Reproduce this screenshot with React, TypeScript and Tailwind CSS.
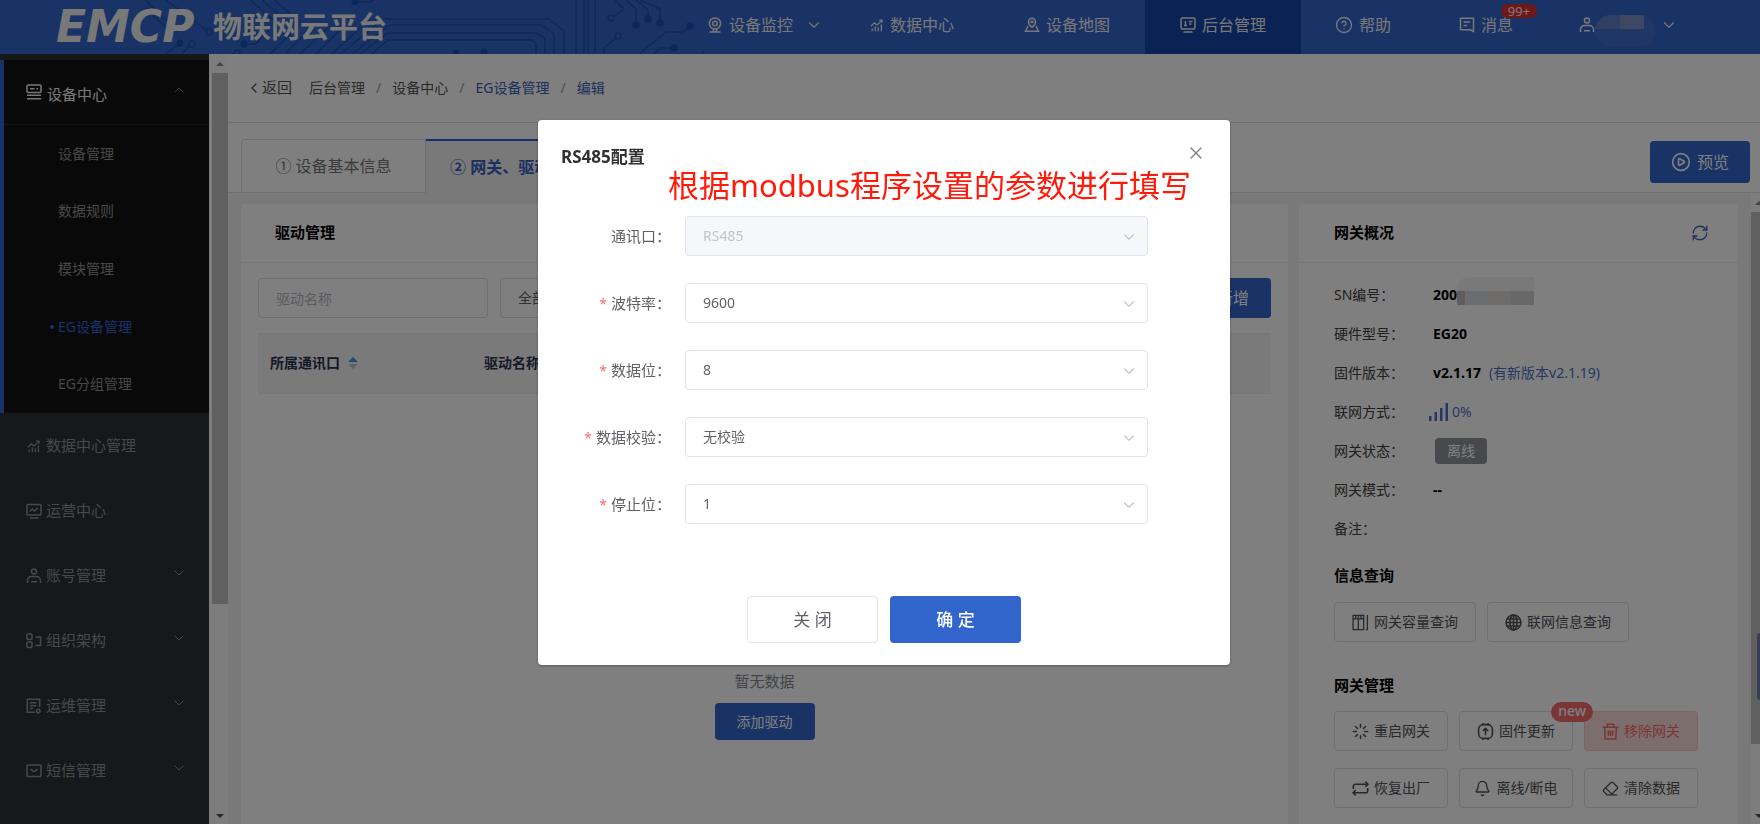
import { useState } from "react"
import type { ReactNode } from "react"
import {
    Bell,
    ChevronDown,
    ChevronLeft,
    ChevronUp,
    CircleHelp,
    CirclePlay,
    Eraser,
    Globe,
    Loader,
    RefreshCw,
    X
} from "lucide-react"

function Icon({ children, className = "size-4" }: { children: ReactNode, className?: string }) {
    return (
        <svg viewBox="0 0 16 16" fill="none" stroke="currentColor" strokeWidth="1.5" className={`${className} shrink-0`} aria-hidden="true">
            {children}
        </svg>
    )
}

const CameraIcon = () => (
    <Icon><circle cx="8" cy="6.5" r="5.6" /><circle cx="8" cy="6.5" r="2.3" /><path d="M6.5 12v2.5M9.5 12v2.5M2.5 15h11" /></Icon>
)
const ChartIcon = ({ className }: { className?: string }) => (
    <Icon className={className}><path d="M1 9.5 5 5.5l3 2.5 5.5-5M10.5 2.5h3.2v3M2.5 12v3M6 9.5V15M9.5 10.5V15M13 7.5V15" /></Icon>
)
const MapIcon = () => (
    <Icon><path d="M8 10.5S4.5 7.6 4.5 4.8a3.5 3.5 0 0 1 7 0c0 2.8-3.5 5.7-3.5 5.7Z" /><circle cx="8" cy="4.8" r=".8" /><path d="M4 9 1.5 14.2h13L12 9" /></Icon>
)
const ConsoleIcon = () => (
    <Icon><rect x="1" y="1" width="14" height="11" rx="1.5" /><path d="M3.5 15h9M5.5 4v5M4 8.6h3M9 4.5h3.5M9 7h2.5" /></Icon>
)
const MessageIcon = () => (
    <Icon><path d="M1.5 1.2h13v13.3l-3-1.7h-10V1.2ZM4.5 5h6.5M4.5 8.4h3.5" /></Icon>
)
const UserIcon = () => (
    <Icon><circle cx="8" cy="3.4" r="2.5" /><path d="M1.5 15v-2.5a4 4 0 0 1 4-4h5a4 4 0 0 1 4 4V15M5 13.7h6" /></Icon>
)
const DeviceIcon = () => (
    <Icon><rect x="1" y="1" width="14" height="7.5" rx="1" /><path d="M4 4.7h4.5M10.5 4.7H12M1 11.3h14M1 14.7h14" /></Icon>
)
const MonitorIcon = () => (
    <Icon><rect x="1" y="1.5" width="14" height="10.5" rx="1" /><path d="M4 8.5 6.5 6l2 2L12 4.8M4 15h8.5" /></Icon>
)
const OrgIcon = () => (
    <Icon><rect x="1" y="1" width="5" height="5.5" rx="1" /><rect x="1" y="9" width="5" height="5.5" rx="1" /><path d="M9.5 4h5v8.5h-5" /></Icon>
)
const OpsIcon = () => (
    <Icon><path d="M9 14.3H1.3V1.2h12.4V9M4 4.7h6.5M4 7.7h6.5M4 10.5h3" /><circle cx="12.3" cy="13" r="1.8" /></Icon>
)
const MailIcon = () => (
    <Icon><rect x="1" y="2" width="14" height="11.5" rx="1" /><path d="m4.5 6 2.6 2.2h1.8L11.5 6" /></Icon>
)

// PCB style traces behind the logo
function CircuitBackground() {
    return (
        <svg className="absolute left-0 top-0 h-[54px] w-[710px]" viewBox="0 0 710 54" fill="none" stroke="#1c53b6" strokeWidth="1.5" aria-hidden="true">
            <path d="M145 0l33 32M166 0l43 32M148 11l20 18M250 0l26 22M262 0l28 24M274 0l24 20M180 43l-14 11M190 46l-9 8" />
            <path d="M244 44h11l16-16M270 54l24-24M285 54l26-26M300 54l28-26M316 54l28-28M332 54l30-28" />
            <path d="M340 54l44-35h165l15 12v23M352 54l38-29h151l13 9v20M360 54l28-21h149l8 5v16M372 54l16-14h144l4 3v11" />
            <path d="M576 0v54M584 0v54M588 0v54M595 0v54M355 2h15l6-3" />
            <path d="M615 0l9 9-11 8M626 0l10 9v16M636 0l12 10v9M640 0l20 9v14M690 26l-8 6h-16l-27 22M616 38l-12 10v6M674 48h-14l-6 6M704 51l-3 3" />
            <g fill="#1550b8" stroke="none">
                <circle cx="148" cy="11" r="3.5" /><circle cx="180" cy="43" r="3.5" /><circle cx="244" cy="44" r="3.5" />
                <circle cx="355" cy="2" r="3.5" /><circle cx="456" cy="53" r="3.5" /><circle cx="484" cy="52" r="3.5" />
                <circle cx="636" cy="25" r="3.8" /><circle cx="648" cy="19" r="3.8" /><circle cx="660" cy="23" r="3.8" />
                <circle cx="690" cy="26" r="3.8" /><circle cx="674" cy="48" r="3.5" />
            </g>
            <g fill="#3366cc">
                <circle cx="192" cy="44" r="3" /><circle cx="209" cy="32" r="3" /><circle cx="237" cy="53" r="3" />
                <circle cx="611" cy="18" r="3" /><circle cx="618" cy="36" r="3" />
            </g>
        </svg>
    )
}

function Header() {
    const item = "flex h-full items-center gap-1.5 px-[35px] pb-1"
    return (
        <header className="relative flex h-[54px] shrink-0 items-center bg-[#3366cc] text-base text-[#f0f0f0]">
            <CircuitBackground />
            <a href="#" className="relative flex items-center gap-2 pl-14">
                <span className="w-[149px] font-['DejaVu_Sans',sans-serif] text-[44px] font-bold italic leading-[54px]">EMCP</span>
                <span className="text-[29px] font-bold leading-[54px]">物联网云平台</span>
            </a>
            <nav className="relative ml-auto flex h-full whitespace-nowrap">
                <button type="button" className="flex h-full items-center gap-1.5 pb-1 pr-3">
                    <CameraIcon />设备监控<ChevronDown className="ml-1.5 size-[18px]" strokeWidth={1.5} />
                </button>
                <a href="#" className={item}><ChartIcon className="size-3.5" />数据中心</a>
                <a href="#" className={item}><MapIcon />设备地图</a>
                <a href="#" className={`${item} bg-[#1644a8]`}><ConsoleIcon />后台管理</a>
                <a href="#" className="flex h-full items-center gap-1.5 px-[34px] pb-1"><CircleHelp className="size-[18px]" strokeWidth={1.8} />帮助</a>
                <a href="#" className="relative flex h-full items-center gap-1.5 px-[34px] pb-1 leading-4">
                    <MessageIcon />消息
                    <span className="absolute left-[76px] top-1 flex h-3.5 w-9 items-center justify-center rounded-full bg-[#dc3232] text-[13px] leading-3">99+</span>
                </a>
                <button type="button" aria-label="用户" className="flex h-full items-center pb-1 pl-8 pr-[82px]">
                    <UserIcon />
                    <span className="mt-3 h-8 w-[61px] overflow-hidden rounded-2xl bg-[#416ccb]">
                        <span className="flex h-3.5">
                            <span className="flex-1 bg-[#6280c4]" />
                            <span className="flex-1 bg-[#7c91c4]" />
                            <span className="w-3" />
                        </span>
                    </span>
                    <ChevronDown className="ml-1 size-[18px]" strokeWidth={1.5} />
                </button>
            </nav>
        </header>
    )
}

const subMenu = ["设备管理", "数据规则", "模块管理", "EG设备管理", "EG分组管理"]

const mainMenu = [
    { label: "数据中心管理", icon: <ChartIcon className="size-4 p-px" />, open: false },
    { label: "运营中心", icon: <MonitorIcon />, open: false },
    { label: "账号管理", icon: <UserIcon />, open: true },
    { label: "组织架构", icon: <OrgIcon />, open: true },
    { label: "运维管理", icon: <OpsIcon />, open: true },
    { label: "短信管理", icon: <MailIcon />, open: true }
]

function Sidebar() {
    return (
        <aside className="w-[209px] shrink-0 overflow-hidden bg-[#2e3033] pt-1.5 text-[15px] text-[#8e9194]">
            <div className="border-l-4 border-[#3366cc] bg-[#131313]">
                <button type="button" className="flex h-[65px] w-full items-center gap-[5px] border-b border-[#262626] pl-[22px] pr-[22px] text-[#f0f0f0]">
                    <DeviceIcon />
                    <span className="pt-1">设备中心</span>
                    <ChevronUp className="mb-1 ml-auto size-4 text-[#777]" strokeWidth={1.5} />
                </button>
                <ul className="flex h-72 flex-col text-sm">
                    {subMenu.map(name => (
                        <li key={name} className="flex flex-1 items-center">
                            {name === "EG设备管理" ? (
                                <a href="#" className="flex items-center gap-1 pl-[46px] text-[#2f64d0]">
                                    <span className="size-1 rounded-full bg-[#3366cc]" />{name}
                                </a>
                            ) : (
                                <a href="#" className="pl-[54px]">{name}</a>
                            )}
                        </li>
                    ))}
                </ul>
            </div>
            {mainMenu.map(m => (
                <a key={m.label} href="#" className="flex h-[65px] items-center gap-1 pl-[26px] pr-[22px]">
                    {m.icon}
                    <span>{m.label}</span>
                    {m.open && <ChevronDown className="mb-1.5 ml-auto size-4" strokeWidth={1.5} />}
                </a>
            ))}
        </aside>
    )
}

function ScrollTrack({ thumb, className }: { thumb: string, className: string }) {
    return (
        <div className={`flex shrink-0 flex-col bg-[#fbfbfb] ${className}`} aria-hidden="true">
            <svg viewBox="0 0 16 19" className="h-[19px] w-4 fill-[#8a8a8a]"><path d="M4 12l4-4 4 4z" /></svg>
            <div className="min-h-0 flex-1">
                <div className={`bg-[#c1c1c1] ${thumb}`} />
            </div>
            <svg viewBox="0 0 16 14" className="h-3.5 w-4 fill-[#505050]"><path d="M4 4l4 4 4-4z" /></svg>
        </div>
    )
}

function DriverCard() {
    return (
        <section className="min-w-0 flex-1 rounded-t bg-white">
            <h2 className="flex h-[59px] items-center border-b border-[#ebeef5] pb-0.5 pl-[34px] text-[15px] font-bold text-black">驱动管理</h2>
            <div className="px-[17px] pt-[15px]">
                <div className="flex gap-3">
                    <input
                        type="text"
                        aria-label="驱动名称"
                        placeholder="驱动名称"
                        className="h-10 w-[230px] rounded border border-[#dcdfe6] px-[17px] text-sm placeholder:text-[#b4b8bf]"
                    />
                    <select aria-label="全部" className="h-10 w-[230px] appearance-none rounded border border-[#dcdfe6] px-[17px] text-sm text-[#606266]">
                        <option>全部</option>
                    </select>
                    <button type="button" className="ml-auto h-10 rounded bg-[#3366cc] px-[22px] text-base text-white">新增</button>
                </div>
                <table className="mt-[15px] w-full table-fixed bg-[#f4f4f4] text-sm text-[#2b3350]">
                    <thead>
                        <tr className="h-[60px] border-y border-[#ebeef5] text-left">
                            <th className="w-[214px] pb-0.5 pl-3 font-bold">
                                <span className="flex items-center gap-2">
                                    所属通讯口
                                    <svg viewBox="0 0 10 14" className="h-3.5 w-2.5">
                                        <path d="M0 6l5-5 5 5z" fill="#3f97f0" />
                                        <path d="M0 8l5 5 5-5z" fill="#c0c4cc" />
                                    </svg>
                                </span>
                            </th>
                            <th className="pb-0.5 pl-3 font-bold">驱动名称</th>
                        </tr>
                    </thead>
                </table>
                <div className="flex flex-col items-center pt-[275px] text-[#85888e]">
                    <p className="text-[15px] leading-6">暂无数据</p>
                    <button type="button" className="mt-2.5 h-[37px] rounded bg-[#3366cc] px-[22px] text-sm text-white">添加驱动</button>
                </div>
            </div>
        </section>
    )
}

function InfoRow({ label, children }: { label: string, children?: ReactNode }) {
    return (
        <div className="flex h-[39px] items-center">
            <dt className="w-[99px] shrink-0 text-[#404040]">{label}：</dt>
            <dd className="flex items-center font-bold text-black">{children}</dd>
        </div>
    )
}

const outline = "relative flex h-10 items-center justify-center gap-[5px] rounded border border-[#dcdfe6] text-sm text-[#505256]"

function GatewayCard() {
    return (
        <section className="w-[439px] shrink-0 rounded-t bg-white">
            <div className="flex h-[59px] items-center justify-between border-b border-[#ebeef5] pl-[35px] pr-[29px]">
                <h2 className="pb-0.5 text-[15px] font-bold text-black">网关概况</h2>
                <button type="button" aria-label="刷新" className="text-[#4468bd]">
                    <RefreshCw className="size-[18px]" strokeWidth={1.8} />
                </button>
            </div>
            <div className="pl-[35px] pt-3">
                <dl className="text-sm">
                    <InfoRow label="SN编号">
                        200
                        <span className="mb-2 flex h-7 w-[77px] flex-col overflow-hidden rounded-tl-xl" aria-hidden="true">
                            <span className="h-1/2 bg-[#f3f3f3]" />
                            <span className="flex h-1/2">
                                <span className="w-2 bg-[#bfbdbf]" />
                                <span className="flex-1 bg-[#d8dbdc]" />
                                <span className="flex-1 bg-[#dcd8d6]" />
                                <span className="flex-1 bg-[#cfd0cf]" />
                            </span>
                        </span>
                    </InfoRow>
                    <InfoRow label="硬件型号">EG20</InfoRow>
                    <InfoRow label="固件版本">
                        v2.1.17<a href="#" className="ml-2 font-normal text-[#4f70c4]">(有新版本v2.1.19)</a>
                    </InfoRow>
                    <InfoRow label="联网方式">
                        <span className="-ml-1 flex items-center gap-1 font-normal text-[#4f70c4]">
                            <svg viewBox="0 0 19 18" className="h-[18px] w-[19px] fill-[#4a6fcc]">
                                <path d="M0 13h2.5v5H0zM5.5 9H8v9H5.500zM11 5h2.500v13H11zM16.500 0H19v18h-2.500z" />
                            </svg>
                            0%
                        </span>
                    </InfoRow>
                    <InfoRow label="网关状态">
                        <span className="ml-0.5 rounded-sm bg-[#909399] px-3 text-sm font-normal leading-[26px] text-white">离线</span>
                    </InfoRow>
                    <InfoRow label="网关模式">--</InfoRow>
                    <InfoRow label="备注" />
                </dl>
                <h3 className="mt-[15px] text-[15px] font-bold leading-6 text-black">信息查询</h3>
                <div className="mt-[15px] flex gap-[11px]">
                    <button type="button" className={`${outline} w-[142px]`}>
                        <Icon className="size-[17px]"><path d="M1 1.200h5v13.600H1zM6 1.200h5v13.600H6zM1 4.500h10M3.500 4.500V1M8.500 4.500V1M14.500 1v14M13 14.800h2" strokeWidth="1.200" /></Icon>
                        网关容量查询
                    </button>
                    <button type="button" className={`${outline} w-[142px]`}>
                        <Icon className="size-[17px]"><circle cx="8" cy="8" r="7" /><ellipse cx="8" cy="8" rx="3.300" ry="7" /><path d="M8 1v14M1 8h14M2 4.700h12M2 11.300h12" /></Icon>
                        联网信息查询
                    </button>
                </div>
                <h3 className="mt-[31px] text-[15px] font-bold leading-6 text-black">网关管理</h3>
                <div className="mt-3.5 grid grid-cols-[repeat(3,114px)] gap-x-[11px] gap-y-[17px]">
                    <button type="button" className={outline}><Loader className="size-[17px]" strokeWidth={2.2} />重启网关</button>
                    <button type="button" className={outline}>
                        <Icon className="size-[17px]"><rect x="1.500" y="1.500" width="13" height="13" rx="4.500" /><path d="M8 11.500v-6M5.500 7.500 8 5l2.500 2.500M5.500 0v2M10.500 0v2M5.500 14v2M10.500 14v2" /></Icon>
                        固件更新
                        <span className="absolute -right-[21px] -top-2.5 z-10 h-5 rounded-full bg-[#f56c6c] px-[7px] text-sm font-medium leading-[18px] text-white">new</span>
                    </button>
                    <button type="button" className="flex h-10 items-center justify-center gap-[5px] rounded border border-[#fbc4c4] bg-[#fbdcdc] text-sm text-[#f56c6c]">
                        <Icon className="size-[17px]"><path d="M.5 4h15M5 4V1.200h6V4M2.500 4l.5 11h10l.5-11M6 7v5M8 7v5M10 7v5" /></Icon>
                        移除网关
                    </button>
                    <button type="button" className={outline}>
                        <Icon className="size-[17px]"><path d="M1.200 8.500V6a2 2 0 0 1 2-2H15M12.500 1.500 15 4l-2.500 2.500M14.800 7.500V10a2 2 0 0 1-2 2H1M3.500 9.500 1 12l2.500 2.500" /></Icon>
                        恢复出厂
                    </button>
                    <button type="button" className={outline}><Bell className="size-[17px]" strokeWidth={1.9} />离线/断电</button>
                    <button type="button" className={outline}><Eraser className="size-[17px]" strokeWidth={1.9} />清除数据</button>
                </div>
            </div>
        </section>
    )
}

function Content() {
    return (
        <main className="flex min-w-0 flex-1 flex-col bg-white">
            <div className="flex h-[69px] shrink-0 items-center border-b border-[#dcdcdc] pl-[18px] text-sm text-[#555]">
                <button type="button" className="mr-[17px] flex items-center text-[15px]">
                    <ChevronLeft className="size-4" strokeWidth={2} />返回
                </button>
                <nav className="flex gap-[11px]">
                    <a href="#">后台管理</a><span className="text-[#999]">/</span>
                    <a href="#">设备中心</a><span className="text-[#999]">/</span>
                    <a href="#" className="text-[#3c5fb4]">EG设备管理</a><span className="text-[#999]">/</span>
                    <a href="#" className="text-[#3c5fb4]">编辑</a>
                </nav>
            </div>
            <div className="flex h-[70px] shrink-0 items-end border-b border-[#dcdfe6] pl-[13px] pr-2.5">
                <button type="button" className="h-[53px] w-[185px] rounded-tl border border-b-0 border-[#dcdfe6] text-base text-[#777]">① 设备基本信息</button>
                <button type="button" className="-mb-px h-[54px] w-[185px] border-t-2 border-[#2563d8] bg-[#f3f3f3] pl-6 text-left text-base font-bold text-[#3460c0]">② 网关、驱动</button>
                <button type="button" className="mb-[9px] ml-auto flex h-[42px] items-center gap-1.5 rounded bg-[#3366cc] px-[21px] text-base text-white">
                    <CirclePlay className="size-5" strokeWidth={2} />预览
                </button>
            </div>
            <div className="flex min-h-0 flex-1 overflow-hidden bg-[#f3f3f3]">
                <div className="flex min-w-0 flex-1 gap-[11px] pl-[13px] pt-[11px]">
                    <DriverCard />
                    <GatewayCard />
                </div>
                <ScrollTrack className="ml-[13px] w-[9px] overflow-hidden" thumb="h-[89%]" />
            </div>
        </main>
    )
}

interface FieldProps {
    id: string
    label: string
    options: string[]
    disabled?: boolean
}

function Field({ id, label, options, disabled }: FieldProps) {
    const [value, setValue] = useState(options[0])
    return (
        <div className="flex items-center">
            <label htmlFor={id} className="w-[133px] shrink-0 text-right text-[15px] text-[#606266]">
                {!disabled && <span className="mr-1 text-sm text-[#f56c6c]">*</span>}
                {label}：
            </label>
            <div className="relative ml-3.5 flex-1">
                <select
                    id={id}
                    value={value}
                    disabled={disabled}
                    onChange={e => setValue(e.target.value)}
                    className="h-10 w-full appearance-none rounded border border-[#e0e3ea] bg-white px-[17px] text-sm text-[#606266] opacity-100 disabled:bg-[#f5f7fa] disabled:text-[#c0c4cc]"
                >
                    {options.map(o => <option key={o}>{o}</option>)}
                </select>
                <ChevronDown className="pointer-events-none absolute right-2.5 top-3 size-[18px] text-[#c0c4cc]" strokeWidth={1.5} />
            </div>
        </div>
    )
}

function ConfigDialog() {
    return (
        <div className="fixed inset-0 z-20 flex items-start justify-center bg-black/50 pl-2 pt-[120px]">
            <div role="dialog" aria-labelledby="dialog-title" className="relative w-[692px] rounded-sm bg-white pb-[22px] shadow-[0_1px_3px_rgba(0,0,0,0.3)]">
                <div className="flex h-[74px] items-center justify-between pl-[23px] pr-6">
                    <h1 id="dialog-title" className="text-[17px] font-bold text-[#303133]">RS485配置</h1>
                    <button type="button" aria-label="关闭" className="mb-2 text-[#83868c]"><X className="size-5" strokeWidth={1.8} /></button>
                </div>
                <p className="absolute left-[130px] top-[42px] whitespace-nowrap text-[31px] leading-[46px] text-[#ff1a0a]">根据modbus程序设置的参数进行填写</p>
                <form className="flex flex-col gap-[27px] pr-[82px] pt-[22px]">
                    <Field id="port" label="通讯口" options={["RS485"]} disabled />
                    <Field id="baud" label="波特率" options={["9600"]} />
                    <Field id="data" label="数据位" options={["8"]} />
                    <Field id="parity" label="数据校验" options={["无校验"]} />
                    <Field id="stop" label="停止位" options={["1"]} />
                </form>
                <div className="mt-[72px] flex justify-center gap-3">
                    <button type="button" className="h-[47px] w-[131px] rounded border border-[#e0e3ea] text-[17px] text-[#606266]">关 闭</button>
                    <button type="button" className="h-[47px] w-[131px] rounded bg-[#3366cc] text-[17px] font-medium text-white">确 定</button>
                </div>
            </div>
        </div>
    )
}

export default function App() {
    return (
        <div className="flex h-screen flex-col overflow-hidden font-['Noto_Sans','Noto_Sans_CJK_SC',sans-serif]">
            <Header />
            <div className="flex min-h-0 flex-1">
                <Sidebar />
                <ScrollTrack className="w-[19px] pl-[3px]" thumb="h-[72%]" />
                <Content />
            </div>
            <div className="fixed right-0 top-[633px] z-10 h-[67px] w-[3px] rounded-l bg-[#6f7da8]" />
            <ConfigDialog />
        </div>
    )
}
